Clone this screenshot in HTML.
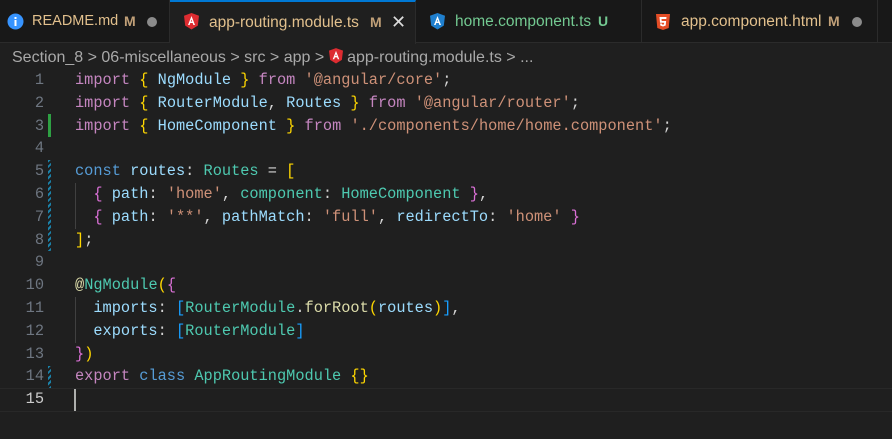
<!DOCTYPE html>
<html><head><style>
*{margin:0;padding:0;box-sizing:border-box}
body{width:892px;height:439px;background:#1f1f1f;overflow:hidden;font-family:"Liberation Sans",sans-serif;position:relative}
.tabs{position:absolute;top:0;left:0;width:892px;height:43px;background:#181818;border-bottom:1px solid #2b2b2b}
.tab{position:absolute;top:0;height:43px;border-right:1px solid #2b2b2b;font-size:15px;line-height:43px;white-space:nowrap}
.tab span{position:absolute;top:0}
.act{background:#1f1f1f;border-top:2px solid #0078d4;height:44px;line-height:41px}
.bc{position:absolute;top:46px;left:12px;font-size:16px;color:#a9a9a9;line-height:24px;white-space:nowrap}
.code{position:absolute;left:0;top:69px;font-family:"Liberation Mono",monospace;font-size:15.3px;line-height:22.8px}
.ln{position:absolute;left:0;width:44px;text-align:right;color:#6e7681}
.l{position:absolute;left:75px;white-space:pre;color:#d4d4d4}
.k{color:#c586c0}.b{color:#569cd6}.v{color:#9cdcfe}.t{color:#4ec9b0}.s{color:#ce9178}.f{color:#dcdcaa}
.y{color:#ffd700}.p{color:#da70d6}.bl{color:#179fff}
.gut{position:absolute;left:48px;width:3px}
.mod{background:repeating-linear-gradient(135deg,#1b81a8 0 2px,#1f1f1f 2px 4px)}
.guide{position:absolute;left:75px;width:1px;background:#404040}
</style></head><body>
<div class="tabs">
 <div class="tab" style="left:0;width:170px">
  <svg style="position:absolute;left:7px;top:13px" width="17" height="17"><circle cx="8.5" cy="8.5" r="8" fill="#3794ff"/><rect x="7.5" y="7" width="2" height="6" fill="#fff"/><rect x="7.5" y="4" width="2" height="2" fill="#fff"/></svg>
  <span style="left:32px;color:#e2c08d;font-size:14.5px">README.md</span><span style="left:124px;color:#c1a078;font-weight:bold;font-size:14px">M</span>
  <svg style="position:absolute;left:147px;top:17px" width="10" height="10"><circle cx="5" cy="5" r="5" fill="#8b8b8b"/></svg>
 </div>
 <div class="tab act" style="left:170px;width:246px">
  <svg style="position:absolute;left:14px;top:11px" width="15" height="17" viewBox="0 0 15 17"><path d="M7.5 0L15 2.7 13.8 12.6 7.5 16.5 1.2 12.6 0 2.7Z" fill="#dd2c31"/><path d="M7.5 3L4 12h1.6l.7-2h2.4l.7 2H11ZM6.8 8.5L7.5 6.5 8.2 8.5Z" fill="#fff"/></svg>
  <span style="left:39px;color:#e2c08d;font-size:15.5px">app-routing.module.ts</span><span style="left:200px;color:#c1a078;font-weight:bold;font-size:14px">M</span>
  <span style="left:221px;color:#ddd;font-size:18px">✕</span>
 </div>
 <div class="tab" style="left:416px;width:226px">
  <svg style="position:absolute;left:14px;top:13px" width="15" height="17" viewBox="0 0 15 17"><path d="M7.5 0L15 2.7 13.8 12.6 7.5 16.5 1.2 12.6 0 2.7Z" fill="#1f7fce"/><path d="M7.5 3L4 12h1.6l.7-2h2.4l.7 2H11ZM6.8 8.5L7.5 6.5 8.2 8.5Z" fill="#fff"/></svg>
  <span style="left:39px;color:#73c991;font-size:15.5px">home.component.ts</span><span style="left:182px;color:#73c991;font-weight:bold;font-size:14px">U</span>
 </div>
 <div class="tab" style="left:642px;width:236px">
  <svg style="position:absolute;left:14px;top:14px" width="14" height="16" viewBox="0 0 14 16"><path d="M0 0h14l-1.3 14L7 16 1.3 14Z" fill="#e44d26"/><path d="M3.5 3h7l-.2 2H5.5l.2 2h4.4l-.4 4.5L7 12.5l-2.7-1-.2-2h1.8l.1.8L7 10.8l1-.5.2-1.5H4Z" fill="#fff"/></svg>
  <span style="left:39px;color:#e2c08d;font-size:15.5px">app.component.html</span><span style="left:186px;color:#c1a078;font-weight:bold;font-size:14px">M</span>
  <svg style="position:absolute;left:210px;top:17px" width="10" height="10"><circle cx="5" cy="5" r="5" fill="#8b8b8b"/></svg>
 </div>
</div>
<div class="bc">Section_8 &gt; 06-miscellaneous &gt; src &gt; app &gt; <svg style="vertical-align:-2px" width="14" height="16" viewBox="0 0 15 17"><path d="M7.5 0L15 2.7 13.8 12.6 7.5 16.5 1.2 12.6 0 2.7Z" fill="#dd2c31"/><path d="M7.5 3L4 12h1.6l.7-2h2.4l.7 2H11ZM6.8 8.5L7.5 6.5 8.2 8.5Z" fill="#fff"/></svg> app-routing.module.ts &gt; ...</div>
<div style="position:absolute;left:0;top:388px;width:892px;height:24px;border-top:1px solid #282828;border-bottom:1px solid #282828"></div>
<div class="gut" style="top:114px;height:23px;background:#2ea043"></div>
<div class="gut mod" style="top:160px;height:91px"></div>
<div class="gut mod" style="top:366px;height:22px"></div>
<div class="guide" style="top:183px;height:46px"></div>
<div class="guide" style="top:297px;height:46px"></div>
<div style="position:absolute;left:74px;top:389px;width:2px;height:22px;background:#aeafad"></div>
<div class="code">
<div class="ln" style="top:0">1</div><div class="ln" style="top:22.8px">2</div><div class="ln" style="top:45.6px">3</div><div class="ln" style="top:68.4px">4</div><div class="ln" style="top:91.2px">5</div><div class="ln" style="top:114px">6</div><div class="ln" style="top:136.8px">7</div><div class="ln" style="top:159.6px">8</div><div class="ln" style="top:182.4px">9</div><div class="ln" style="top:205.2px">10</div><div class="ln" style="top:228px">11</div><div class="ln" style="top:250.8px">12</div><div class="ln" style="top:273.6px">13</div><div class="ln" style="top:296.4px">14</div><div class="ln" style="top:319.2px;color:#ccc">15</div>
<div class="l" style="top:0"><span class="k">import</span> <span class="y">{</span> <span class="v">NgModule</span> <span class="y">}</span> <span class="k">from</span> <span class="s">'@angular/core'</span>;</div>
<div class="l" style="top:22.8px"><span class="k">import</span> <span class="y">{</span> <span class="v">RouterModule</span>, <span class="v">Routes</span> <span class="y">}</span> <span class="k">from</span> <span class="s">'@angular/router'</span>;</div>
<div class="l" style="top:45.6px"><span class="k">import</span> <span class="y">{</span> <span class="v">HomeComponent</span> <span class="y">}</span> <span class="k">from</span> <span class="s">'./components/home/home.component'</span>;</div>
<div class="l" style="top:91.2px"><span class="b">const</span> <span class="v">routes</span>: <span class="t">Routes</span> = <span class="y">[</span></div>
<div class="l" style="top:114px">  <span class="p">{</span> <span class="v">path</span>: <span class="s">'home'</span>, <span class="v" style="color:#4ec9b0">component</span>: <span class="t">HomeComponent</span> <span class="p">}</span>,</div>
<div class="l" style="top:136.8px">  <span class="p">{</span> <span class="v">path</span>: <span class="s">'**'</span>, <span class="v">pathMatch</span>: <span class="s">'full'</span>, <span class="v">redirectTo</span>: <span class="s">'home'</span> <span class="p">}</span></div>
<div class="l" style="top:159.6px"><span class="y">]</span>;</div>
<div class="l" style="top:205.2px"><span class="f">@</span><span class="t">NgModule</span><span class="y">(</span><span class="p">{</span></div>
<div class="l" style="top:228px">  <span class="v">imports</span>: <span class="bl">[</span><span class="t">RouterModule</span>.<span class="f">forRoot</span><span class="y">(</span><span class="v">routes</span><span class="y">)</span><span class="bl">]</span>,</div>
<div class="l" style="top:250.8px">  <span class="v">exports</span>: <span class="bl">[</span><span class="t">RouterModule</span><span class="bl">]</span></div>
<div class="l" style="top:273.6px"><span class="p">}</span><span class="y">)</span></div>
<div class="l" style="top:296.4px"><span class="k">export</span> <span class="b">class</span> <span class="t">AppRoutingModule</span> <span class="y">{}</span></div>
</div>
</body></html>
